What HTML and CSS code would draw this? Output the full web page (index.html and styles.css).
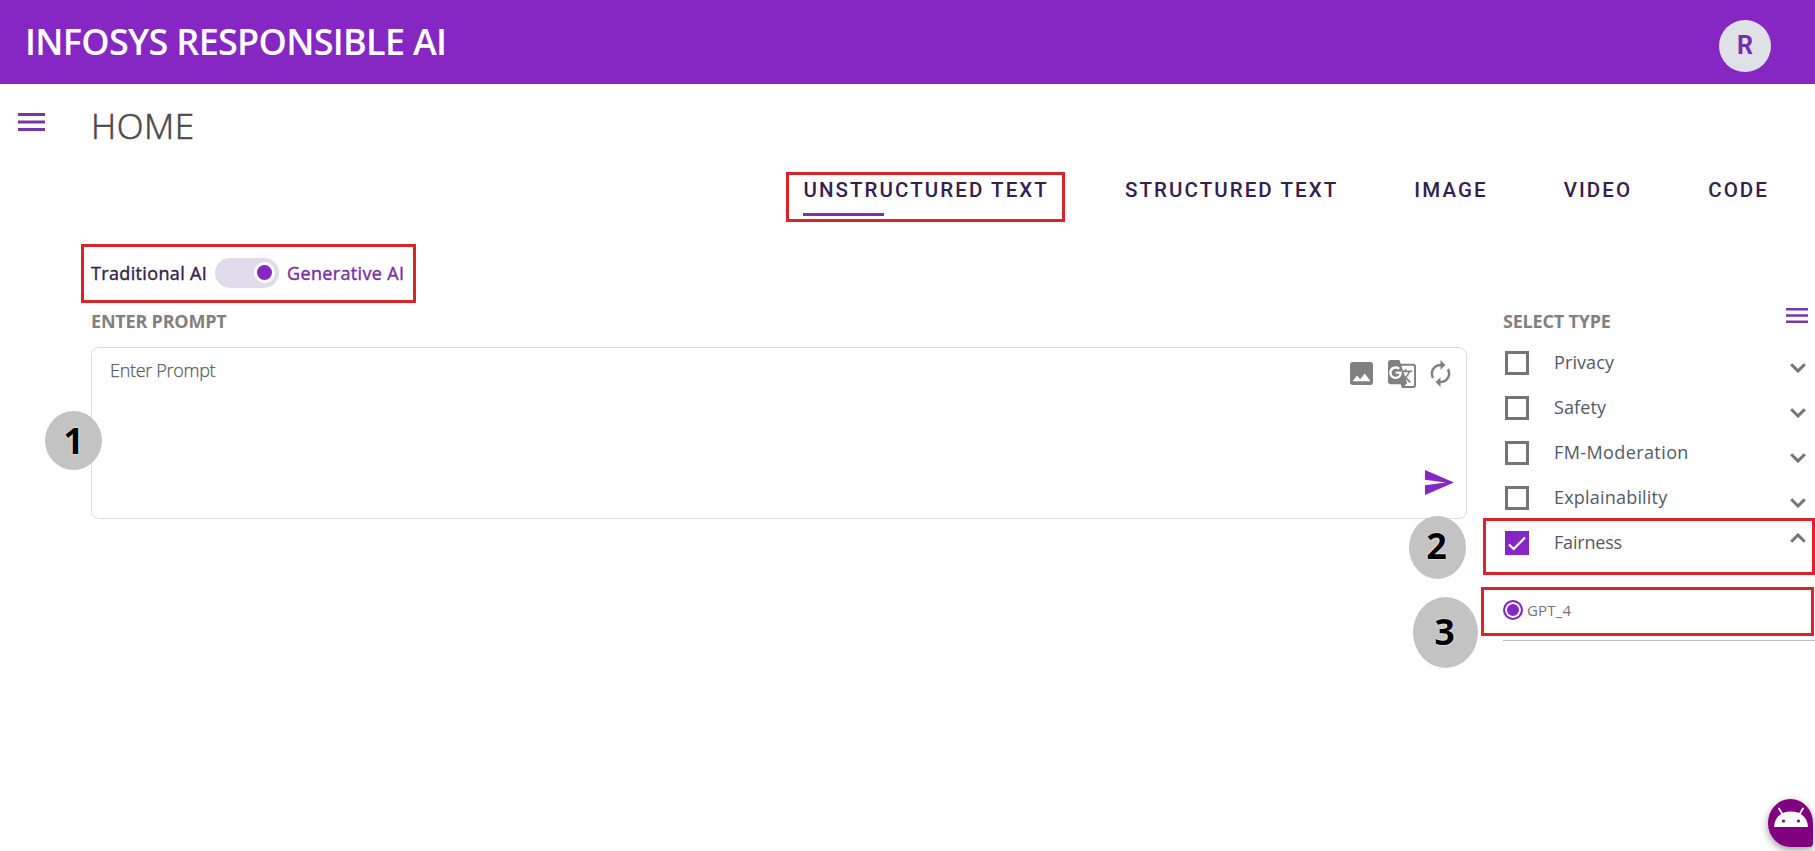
FILE: index.html
```html
<!DOCTYPE html>
<html lang="en">
<head>
<meta charset="utf-8">
<title>Infosys Responsible AI</title>
<link rel="stylesheet" href="styles.css">
</head>
<body>
<header class="topbar">
  <h1 class="brand">INFOSYS RESPONSIBLE AI</h1>
  <div class="avatar">R</div>
</header>
<div class="page">
  <aside class="rail">
    <svg class="burger" viewBox="0 0 27 18"><path d="M0 0h27v3H0zM0 7.500h27v3H0zM0 15h27v3H0z"/></svg>
  </aside>
  <main class="content">
    <h2 class="title">HOME</h2>
    <nav class="tabs">
      <a class="tab tab-active">UNSTRUCTURED TEXT</a>
      <a class="tab">STRUCTURED TEXT</a>
      <a class="tab">IMAGE</a>
      <a class="tab">VIDEO</a>
      <a class="tab">CODE</a>
    </nav>
    <div class="columns">
      <section class="left">
        <div class="mode">
          <span class="mode-old">Traditional AI</span>
          <span class="switch"><span class="knob"></span></span>
          <span class="mode-new">Generative AI</span>
        </div>
        <h3 class="label label-prompt">ENTER PROMPT</h3>
        <div class="prompt">
          <span class="placeholder">Enter Prompt</span>
          <div class="tools">
            <div class="tool-row">
              <svg class="ic-image" viewBox="3 3 18 18"><path d="M21 19V5c0-1.100-.9-2-2-2H5c-1.100 0-2 .9-2 2v14c0 1.100.9 2 2 2h14c1.100 0 2-.9 2-2zM8.500 13.500l2.500 3.010L14.500 12l4.500 6H5l3.500-4.500z"/></svg>
              <svg class="ic-translate" viewBox="1 1 22 22"><path d="M21 4H11l-1-3H3c-1.100 0-2 .9-2 2v15c0 1.100.9 2 2 2h8l1 3h9c1.100 0 2-.9 2-2V6c0-1.100-.9-2-2-2zM7 16c-2.760 0-5-2.240-5-5s2.240-5 5-5c1.350 0 2.480.5 3.350 1.300L9.030 8.570c-.38-.36-1.040-.78-2.030-.78-1.740 0-3.150 1.440-3.150 3.210S5.260 14.210 7 14.210c2.010 0 2.840-1.440 2.920-2.410H7v-1.710h4.680c.07.31.12.61.12 1.020C11.800 13.970 9.890 16 7 16zm6.170-5.420h3.700c-.43 1.250-1.110 2.430-2.050 3.470-.31-.35-.6-.72-.86-1.100l-.79-2.370zm8.330 9.920c0 .55-.45 1-1 1H14l2-2.500-1.040-3.100 3.100 3.100.92-.92-3.300-3.250.02-.02c1.130-1.250 1.930-2.690 2.400-4.220H20v-1.300h-4.530V8h-1.290v1.290h-1.440L11.460 5.500h9.040c.55 0 1 .45 1 1v14z"/></svg>
              <svg class="ic-renew" viewBox="4 1 16 22"><path d="M12 6v3l4-4-4-4v3c-4.420 0-8 3.580-8 8 0 1.570.46 3.030 1.240 4.260L6.700 14.800c-.45-.83-.7-1.790-.7-2.800 0-3.310 2.690-6 6-6zm6.760 1.740L17.300 9.200c.44.84.7 1.790.7 2.800 0 3.310-2.690 6-6 6v-3l-4 4 4 4v-3c4.420 0 8-3.580 8-8 0-1.570-.46-3.030-1.240-4.260z"/></svg>
            </div>
            <svg class="ic-send" viewBox="2 3 21 18" preserveAspectRatio="none"><path d="M2.010 21L23 12 2.010 3 2 10l15 2-15 2z"/></svg>
          </div>
        </div>
      </section>
      <section class="right">
        <div class="right-head">
          <h3 class="label label-type">SELECT TYPE</h3>
          <svg class="burger burger-small" viewBox="0 0 22 15"><path d="M0 0h22v2.500H0zM0 6.200h22v2.500H0zM0 12.500h22V15H0z"/></svg>
        </div>
        <div class="option"><i class="box"></i><span class="name name-narrow">Privacy</span><svg class="chev" viewBox="0 0 16 10"><path d="M1.200 1.200L8 8l6.800-6.800"/></svg></div>
        <div class="option"><i class="box"></i><span class="name name-narrow">Safety</span><svg class="chev" viewBox="0 0 16 10"><path d="M1.200 1.200L8 8l6.800-6.800"/></svg></div>
        <div class="option"><i class="box"></i><span class="name name-wide">FM-Moderation</span><svg class="chev" viewBox="0 0 16 10"><path d="M1.200 1.200L8 8l6.800-6.800"/></svg></div>
        <div class="option"><i class="box"></i><span class="name">Explainability</span><svg class="chev" viewBox="0 0 16 10"><path d="M1.200 1.200L8 8l6.800-6.800"/></svg></div>
        <div class="option"><i class="box box-on"><svg viewBox="0 0 24 24"><path d="M4 13.500l4.700 4.500L20 6.500"/></svg></i><span class="name name-tight">Fairness</span><svg class="chev chev-up" viewBox="0 0 16 10"><path d="M1.200 8.800L8 2l6.800 6.800"/></svg></div>
        <div class="model"><i class="radio"></i><span class="model-name">GPT_4</span></div>
      </section>
    </div>
  </main>
</div>

<div class="mark mark-tab"></div>
<div class="mark mark-mode"></div>
<div class="mark mark-fairness"></div>
<div class="mark mark-model"></div>
<div class="step step-1">1</div>
<div class="step step-2">2</div>
<div class="step step-3">3</div>
<div class="bot">
  <svg viewBox="0 0 34 22"><path class="bot-head" d="M0 20C.6 10.500 7 4.500 17 4.500S33.400 10.500 34 20z"/><path class="bot-ear" d="M9 8L5 1.500M25 8l4-6.500"/><circle cx="9.500" cy="14" r="1.600"/><circle cx="24.500" cy="14" r="1.600"/></svg>
</div>
</body>
</html>
```
FILE: styles.css
```css
* { box-sizing: border-box; }
body {
  margin: 0;
  position: relative;
  width: 1815px;
  height: 851px;
  overflow: hidden;
  background: #fff;
  font-family: "Open Sans", "Noto Sans", sans-serif;
}
h1, h2, h3 { margin: 0; }
svg { display: block; }
span, a, h1, h2, h3 { white-space: nowrap; }

.topbar {
  display: flex;
  justify-content: space-between;
  align-items: flex-start;
  height: 84px;
  padding: 20px 44px 0 25px;
  background: #8626c3;
}
.brand {
  color: #fff;
  font-size: 36px;
  line-height: 44px;
  font-weight: 600;
  letter-spacing: -0.7px;
}
.avatar {
  width: 52px;
  height: 52px;
  border-radius: 50%;
  background: #dee2e6;
  color: #7a2db0;
  font: 700 25px/52px Roboto, sans-serif;
  text-align: center;
}

.page { display: flex; }
.rail { width: 91px; padding: 29px 0 0 18px; }
.burger { width: 27px; height: 18px; fill: #7a35a8; }
.burger-small { width: 22px; height: 15px; }
.content { flex: 1; min-width: 0; }
.title {
  height: 84px;
  padding-top: 19px;
  color: #4a4a4a;
  font-size: 35px;
  line-height: 46px;
  font-weight: 300;
  letter-spacing: 0.500px;
  -webkit-text-stroke: 0.600px #4a4a4a;
}

.tabs {
  display: flex;
  justify-content: flex-end;
  gap: 76px;
  height: 76px;
  padding: 10px 46px 0 0;
}
.tab {
  height: 38px;
  color: #33204f;
  font: 500 20.500px/24px Roboto, sans-serif;
  letter-spacing: 2.080px;
}
.tab-active::after {
  content: "";
  display: block;
  width: 81px;
  height: 3px;
  margin-top: 11px;
  background: #7a35a8;
}

.columns { display: flex; justify-content: space-between; }
.left { width: 1376px; }
.mode {
  display: flex;
  align-items: center;
  height: 59px;
  padding-bottom: 2px;
  font-size: 18px;
  font-weight: 400;
  letter-spacing: 0.350px;
}
.mode-old { width: 124px; color: #33204f; -webkit-text-stroke: 0.400px #33204f; }
.mode-new { margin-left: 8px; color: #7a2da8; -webkit-text-stroke: 0.400px #7a2da8; }
.switch {
  display: flex;
  justify-content: flex-end;
  align-items: center;
  width: 64px;
  height: 30px;
  padding-right: 4px;
  border-radius: 15px;
  background: #dfdbea;
}
.knob {
  width: 21px;
  height: 21px;
  border: 3px solid #fff;
  border-radius: 50%;
  background: #8626c3;
}
.label {
  color: #808080;
  font-size: 18px;
  line-height: 24px;
  font-weight: 700;
  letter-spacing: -0.200px;
}
.label-prompt { margin-top: 6px; }
.prompt {
  display: flex;
  justify-content: space-between;
  height: 172px;
  margin-top: 14px;
  padding: 11px 12px 0 18px;
  border: 1px solid #dcdcdc;
  border-radius: 8px;
}
.placeholder {
  margin-top: -1px;
  color: #555b60;
  font-size: 18px;
  line-height: 24px;
  font-weight: 300;
  letter-spacing: -0.300px;
  -webkit-text-stroke: 0.250px #555b60;
}
.tools { display: flex; flex-direction: column; align-items: flex-end; }
.tool-row { display: flex; align-items: center; gap: 14px; height: 29px; padding-right: 3px; fill: #808080; }
.ic-image { width: 23px; height: 23px; margin-right: 1px; }
.ic-translate { width: 28px; height: 28px; }
.ic-renew { width: 21px; height: 27px; }
.ic-send { width: 29px; height: 25px; margin-top: 82px; fill: #8626c3; }

.right { width: 312px; padding-top: 64px; }
.right-head { display: flex; justify-content: space-between; height: 43px; padding: 0 7px 0 0; }
.right-head .label { padding-top: 1px; }
.option {
  display: flex;
  align-items: flex-start;
  height: 45px;
  padding: 0 9px 0 2px;
}
.box { width: 24px; height: 24px; border: 3px solid #757575; }
.box-on { border: 0; background: #8626c3; }
.box-on svg { width: 24px; height: 24px; fill: none; stroke: #fff; stroke-width: 2.200; }
.name {
  flex: 1;
  margin: -1px 0 0 25px;
  color: #505a68;
  font-size: 18px;
  line-height: 24px;
  letter-spacing: 0.200px;
}
.name-narrow { letter-spacing: 0.100px; }
.name-wide { letter-spacing: 0.400px; }
.name-tight { letter-spacing: -0.200px; }
.chev { width: 16px; height: 10px; margin-top: 12px; fill: none; stroke: #757575; stroke-width: 3; }
.chev-up { margin-top: 2px; }
.model {
  display: flex;
  align-items: center;
  height: 65px;
  padding-top: 4px;
  border-bottom: 1px solid #bdbdbd;
}
.radio {
  width: 20px;
  height: 20px;
  border: 2px solid #8626c3;
  border-radius: 50%;
  background: #8626c3;
  box-shadow: inset 0 0 0 2px #fff;
}
.model-name { margin-left: 4px; color: #757575; font-size: 15px; line-height: 20px; letter-spacing: 0.200px; }

.mark { position: absolute; border: 3px solid #dc232b; }
.mark-tab { left: 786px; top: 172px; width: 279px; height: 50px; }
.mark-mode { left: 81px; top: 244px; width: 335px; height: 59px; }
.mark-fairness { left: 1483px; top: 518px; width: 332px; height: 57px; }
.mark-model { left: 1481px; top: 587px; width: 333px; height: 49px; }

.step {
  position: absolute;
  display: flex;
  justify-content: center;
  align-items: center;
  border-radius: 50%;
  background: #c3c3c3;
  color: #000;
  font-size: 36px;
  line-height: 40px;
  font-weight: 700;
  text-shadow: 0 0 2px #fff, 0 0 1px #fff;
}
.step-1 { left: 45px; top: 411px; width: 57px; height: 59px; }
.step-2 { left: 1409px; top: 516px; width: 57px; height: 63px; padding: 0 2px 3px 0; }
.step-3 { left: 1413px; top: 597px; width: 65px; height: 71px; padding: 0 2px 1px 0; }

.bot {
  position: absolute;
  left: 1768px;
  top: 799px;
  width: 45px;
  height: 48px;
  padding: 8px 0 0 6px;
  border-radius: 50% 50% 4px 50%;
  background: #800080;
  box-shadow: 0 3px 8px rgba(0, 0, 0, 0.4);
}
.bot svg { width: 34px; height: 22px; fill: #800080; }
.bot .bot-head { fill: #fff; }
.bot .bot-ear { stroke: #fff; stroke-width: 1.800; stroke-linecap: round; }
```
